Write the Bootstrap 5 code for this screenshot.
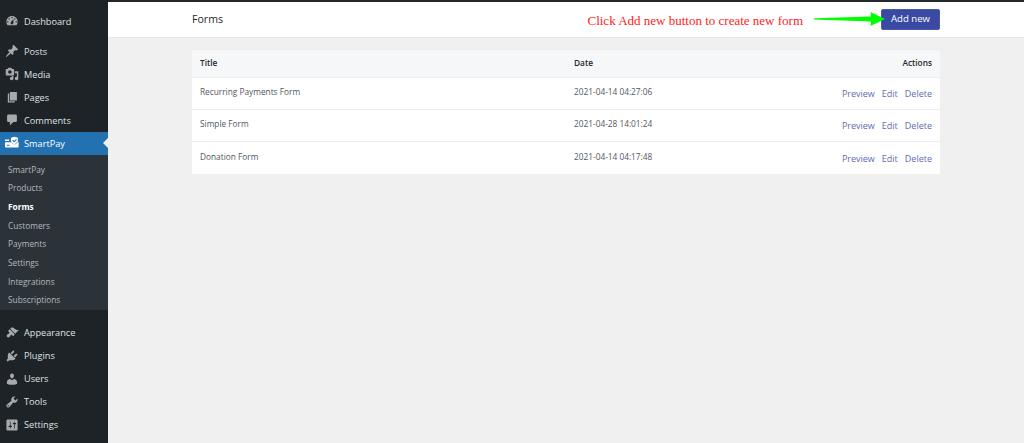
<!DOCTYPE html>
<html lang="en"><head><meta charset="utf-8"><title>Forms</title>
<link href="https://cdn.jsdelivr.net/npm/bootstrap@5.3.0/dist/css/bootstrap.min.css" rel="stylesheet">
<style>
html,body{height:443px;overflow:hidden;}
body{background:#f0f0f1;font-family:"Open Sans","Noto Sans",sans-serif;color:#3c434a;}
.shell{height:443px;}
.wpside{width:108px;flex:none;background:#1d2327;padding-top:9.5px;}
.wpgroup{margin-bottom:7px;}
.wpitem{height:23px;color:#dfe2e5;font-size:9.2px;padding-left:5px;gap:5px;line-height:23px;}
.wpitem svg{width:14px;height:14px;flex:none;fill:#a7aaad;}
.wpitem.on{background:#2271b1;color:#fff;position:relative;}
.wpitem.on svg{fill:#fff;}
.wpitem.on::after{content:"";position:absolute;right:0;top:6px;border:5.5px solid transparent;border-right-color:#f0f0f1;border-left:0;}
.wpsub{background:#2c3338;padding:6px 0 0;height:155px;margin-bottom:11.500px;}
.wpsub div{height:18.7px;line-height:18.7px;font-size:8.3px;padding-left:8px;color:#b4b9be;}
.wpsub .cur{color:#fff;font-weight:700;}
.topstrip{height:2px;background:#23282d;}
.topbar{height:36px;background:#fff;border-bottom:1px solid #e8e8e8;padding:0 84px;}
.topttl{font-size:10.6px;color:#23282d;font-weight:500;}
.hint{font-family:"Liberation Serif",serif;font-size:13px;color:#f22;margin-right:11px;margin-top:2px;}
.arrowmark{position:relative;z-index:1;margin-right:-4px;margin-top:-2px;flex:none;}
.addbtn{background:#3a4aa3;border:1px solid #4a59ad;color:#fff;font-size:9.6px;width:59px;height:21px;padding:0;border-radius:2px;}
.bodywrap{padding:11px 84px 0;}
.formtab{background:#fff;margin:0;width:100%;table-layout:fixed;font-size:8.3px;}
.formtab th,.formtab td{padding:0 8px;border-bottom:1px solid #ececf0;vertical-align:middle;color:#50575e;}
.formtab th{height:28px;background:#f6f7f8;color:#23282d;font-weight:600;border-top:1px solid #ececec;}
.formtab td{height:32px;padding-bottom:2px;}
.formtab tr:last-child td{border-bottom:0;height:32px;}
.colt{width:374px;}
.lnk{color:#5f6ab3;font-size:9px;text-decoration:none;margin-left:7px;display:inline-block;margin-top:3px;}
</style></head>
<body>
<div class="d-flex shell">
<nav class="wpside">
 <div class="wpgroup">
  <div class="wpitem d-flex align-items-center"><svg viewBox="0 0 20 20"><path fill-rule="evenodd" d="M3.760 16h12.480c1.100-1.370 1.760-3.110 1.760-5 0-4.420-3.580-8-8-8s-8 3.580-8 8c0 1.890.660 3.630 1.760 5zM10 4c.550 0 1 .450 1 1s-.450 1-1 1-1-.450-1-1 .450-1 1-1zM6 6c.550 0 1 .450 1 1s-.450 1-1 1-1-.450-1-1 .450-1 1-1zm8 0c.550 0 1 .450 1 1s-.450 1-1 1-1-.450-1-1 .450-1 1-1zm-5.370 5.550L12 7v6c0 1.100-.900 2-2 2s-2-.900-2-2c0-.570.240-1.080.630-1.450zM4 10c.550 0 1 .450 1 1s-.450 1-1 1-1-.450-1-1 .450-1 1-1zm12 0c.550 0 1 .450 1 1s-.450 1-1 1-1-.450-1-1 .450-1 1-1z"/></svg>Dashboard</div>
 </div>
 <div class="wpitem d-flex align-items-center"><svg viewBox="0 0 20 20"><path d="M10.440 3.020l1.820-1.820 6.360 6.350-1.830 1.820c-1.050-.680-2.480-.570-3.410.360l-.750.750c-.920.930-1.040 2.350-.350 3.410l-1.830 1.820-2.410-2.410-2.800 2.790c-.420.420-3.380 2.710-3.800 2.290s1.860-3.390 2.280-3.810l2.790-2.790L4.100 9.360l1.830-1.820c1.050.690 2.480.570 3.400-.360l.750-.750c.930-.920 1.050-2.350.360-3.410z"/></svg>Posts</div>
 <div class="wpitem d-flex align-items-center"><svg viewBox="0 0 20 20"><path fill-rule="evenodd" d="M13 11V4c0-.550-.450-1-1-1h-1.670L9 1H5L3.670 3H2c-.550 0-1 .450-1 1v7c0 .550.450 1 1 1h10c.550 0 1-.450 1-1zM7 4.500c1.380 0 2.500 1.120 2.500 2.500S8.380 9.500 7 9.500 4.500 8.380 4.500 7 5.620 4.500 7 4.500zM14 6h5v10.500c0 1.380-1.120 2.500-2.500 2.500S14 17.880 14 16.500s1.120-2.500 2.500-2.500c.170 0 .340.020.500.050V9h-3V6zm-4 8.050V13h2v3.500c0 1.380-1.120 2.500-2.500 2.500S7 17.880 7 16.500 8.120 14 9.500 14c.170 0 .340.020.500.050z"/></svg>Media</div>
 <div class="wpitem d-flex align-items-center"><svg viewBox="0 0 20 20"><path d="M7 15V3h10v12H7zm-1 1h8v2H4V5h2v11z"/></svg>Pages</div>
 <div class="wpitem d-flex align-items-center"><svg viewBox="0 0 20 20"><path d="M5 2h10c1.100 0 2 .900 2 2v7c0 1.100-.900 2-2 2h-3l-5 5v-5H5c-1.100 0-2-.900-2-2V4c0-1.100.900-2 2-2z"/></svg>Comments</div>
 <div class="wpitem on d-flex align-items-center"><svg viewBox="0 0 20 20"><path fill-rule="evenodd" d="M0 5h6v2H0zM0 9h9.500l3.500 4 4.500-4.500 2 .5v6.500a1 1 0 0 1-1 1H1a1 1 0 0 1-1-1zm2.500 3.500v1.500h4v-1.500zM13.500 1l5 1.500v3.500c0 3-2 5-5 6.500-3-1.500-5-3.500-5-6.500V2.500zm-2.200 4.500l-1 1 2.700 2.700 4-4-1-1-3 3z"/></svg>SmartPay</div>
 <div class="wpsub">
  <div>SmartPay</div><div>Products</div><div class="cur">Forms</div><div>Customers</div><div>Payments</div><div>Settings</div><div>Integrations</div><div>Subscriptions</div>
 </div>
 <div class="wpitem d-flex align-items-center"><svg viewBox="0 0 20 20"><path d="M14.480 11.060L7.410 3.990l1.500-1.500c.500-.560 2.300-.470 3.510.320 1.210.800 1.430 1.280 2.910 2.100 1.180.640 2.450 1.260 4.450.850zm-.710.710L6.700 4.700 4.930 6.470c-.390.390-.390 1.020 0 1.410l1.060 1.060c.390.390.390 1.030 0 1.420-.600.600-1.430 1.270-2.210 1.590-.260.110-.490.290-.710.510-.940.940-.940 2.460 0 3.390.930.940 2.460.940 3.390 0 .220-.220.390-.450.500-.710.330-.780 1-1.610 1.600-2.200.390-.390 1.020-.390 1.410 0l1.060 1.060c.390.390 1.030.390 1.420 0z"/></svg>Appearance</div>
 <div class="wpitem d-flex align-items-center"><svg viewBox="0 0 20 20"><path d="M13.110 4.360L9.870 7.600 8 5.730l3.240-3.240c.350-.340 1.050-.200 1.560.320.520.510.660 1.210.310 1.550zm-8 1.770l.910-1.120 9.010 9.010-1.190.840c-.710.710-2.630 1.160-3.820 1.160H6.140L4.900 17.260c-.590.590-1.540.590-2.120 0-.590-.580-.590-1.530 0-2.120l1.240-1.240v-3.880c0-1.130.400-3.190 1.090-3.890zm7.260 3.970l3.240-3.240c.340-.350 1.040-.210 1.550.310.520.510.660 1.210.310 1.550l-3.240 3.250z"/></svg>Plugins</div>
 <div class="wpitem d-flex align-items-center"><svg viewBox="0 0 20 20"><path d="M10 9.250c-2.270 0-2.730-3.440-2.730-3.440C7 4.020 7.820 2 9.970 2c2.160 0 2.980 2.020 2.710 3.810 0 0-.410 3.440-2.680 3.440zm0 2.570L12.720 10c2.390 0 4.520 2.330 4.520 4.530v2.490s-3.650 1.130-7.240 1.130c-3.650 0-7.240-1.130-7.240-1.130v-2.490c0-2.250 1.940-4.480 4.470-4.480z"/></svg>Users</div>
 <div class="wpitem d-flex align-items-center"><svg viewBox="0 0 20 20"><path fill-rule="evenodd" d="M16.680 9.770c-1.340 1.340-3.300 1.670-4.950.990l-5.410 6.520c-.990.990-2.590.990-3.580 0s-.990-2.590 0-3.570l6.520-5.420c-.680-1.650-.350-3.610.990-4.950 1.280-1.280 3.120-1.620 4.720-1.060l-2.890 2.890 2.820 2.820 2.860-2.870c.530 1.580.180 3.400-1.080 4.650zM3.810 16.210c.400.390 1.030.390 1.420 0 .400-.400.400-1.030 0-1.430-.390-.390-1.020-.390-1.420 0-.390.400-.390 1.030 0 1.430z"/></svg>Tools</div>
 <div class="wpitem d-flex align-items-center"><svg viewBox="0 0 20 20"><path fill-rule="evenodd" d="M18 16V4c0-1.100-.900-2-2-2H4c-1.100 0-2 .900-2 2v12c0 1.100.900 2 2 2h12c1.100 0 2-.900 2-2zM8 11h1c.550 0 1 .450 1 1s-.450 1-1 1H8v1.500c0 .280-.220.500-.500.500s-.500-.220-.500-.500V13H6c-.550 0-1-.450-1-1s.450-1 1-1h1V5.500c0-.280.220-.500.500-.500s.500.220.500.500V11zm5-2h-1c-.550 0-1-.450-1-1s.450-1 1-1h1V5.500c0-.280.220-.500.500-.500s.500.220.500.500V7h1c.550 0 1 .450 1 1s-.450 1-1 1h-1v5.500c0 .280-.220.500-.500.500s-.500-.220-.500-.500V9z"/></svg>Settings</div>
</nav>
<main class="flex-grow-1">
 <div class="topstrip"></div>
 <div class="topbar d-flex align-items-center">
  <span class="topttl">Forms</span>
  <span class="hint ms-auto">Click Add new button to create new form</span>
  <svg class="arrowmark" width="71" height="16" viewBox="0 0 71 16"><path d="M0 7.300V8.500L57 10.500 56.500 15 71 8 56.500 1 57 5.500Z" fill="#0f0"/></svg>
  <button class="addbtn" type="button">Add new</button>
 </div>
 <div class="bodywrap">
  <table class="formtab">
   <thead><tr><th class="colt">Title</th><th>Date</th><th class="text-end">Actions</th></tr></thead>
   <tbody>
    <tr><td>Recurring Payments Form</td><td>2021-04-14 04:27:06</td><td class="text-end"><a class="lnk" href="#">Preview</a><a class="lnk" href="#">Edit</a><a class="lnk" href="#">Delete</a></td></tr>
    <tr><td>Simple Form</td><td>2021-04-28 14:01:24</td><td class="text-end"><a class="lnk" href="#">Preview</a><a class="lnk" href="#">Edit</a><a class="lnk" href="#">Delete</a></td></tr>
    <tr><td>Donation Form</td><td>2021-04-14 04:17:48</td><td class="text-end"><a class="lnk" href="#">Preview</a><a class="lnk" href="#">Edit</a><a class="lnk" href="#">Delete</a></td></tr>
   </tbody>
  </table>
 </div>
</main>
</div>
<script src="https://cdn.jsdelivr.net/npm/bootstrap@5.3.0/dist/js/bootstrap.bundle.min.js"></script>
</body></html>
